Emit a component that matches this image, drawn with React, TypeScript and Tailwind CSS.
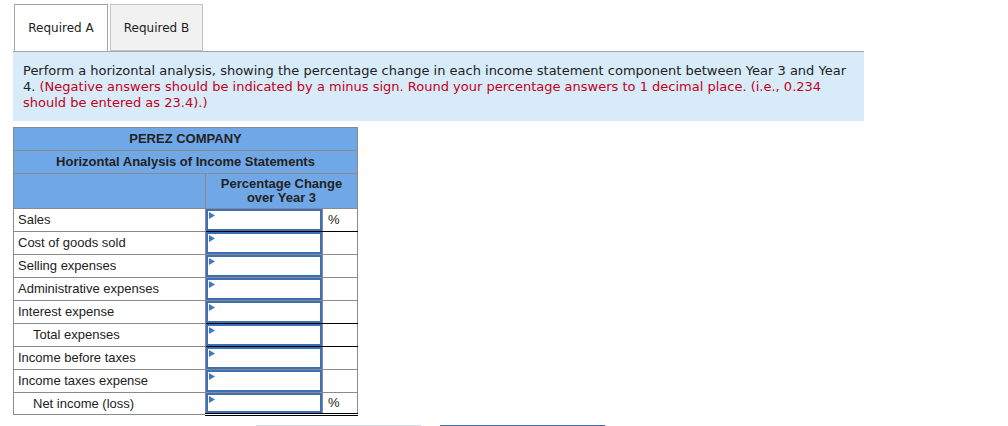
const rows = [
  { label: 'Sales', indent: false, pct: true, line: 'single' },
  { label: 'Cost of goods sold', indent: false, pct: false, line: 'none' },
  { label: 'Selling expenses', indent: false, pct: false, line: 'none' },
  { label: 'Administrative expenses', indent: false, pct: false, line: 'none' },
  { label: 'Interest expense', indent: false, pct: false, line: 'single' },
  { label: 'Total expenses', indent: true, pct: false, line: 'single' },
  { label: 'Income before taxes', indent: false, pct: false, line: 'none' },
  { label: 'Income taxes expense', indent: false, pct: false, line: 'single' },
  { label: 'Net income (loss)', indent: true, pct: true, line: 'double' },
];

function Flag() {
  return (
    <svg className="absolute left-[1px] top-[1px]" width="6" height="7" viewBox="0 0 6 7">
      <path d="M0 0 L6 3.5 L0 7 Z" fill="#3a78d0" />
    </svg>
  );
}

export default function App() {
  return (
    <div className="pl-[13px] pt-[4px] bg-white min-h-[426px] text-[#222]">
      {/* tabs */}
      <div className="flex font-['DejaVu_Sans',sans-serif] text-[12px]">
        <div className="ml-[1px] w-[94px] h-[47px] border border-b-0 border-[#a6a6a6] bg-white flex items-center justify-center">
          Required A
        </div>
        <div className="ml-[2px] w-[93px] h-[47px] border border-[#c4c4c4] bg-[#f1f1f1] flex items-center justify-center">
          Required B
        </div>
      </div>

      {/* instructions */}
      <div className="w-[851px] border-t border-[#a6a6a6] bg-[#d8ebf9] px-[10px] pt-[11px] pb-[10px] font-['DejaVu_Sans',sans-serif] text-[13px] leading-[16px]">
        <p>
          Perform a horizontal analysis, showing the percentage change in each income statement component between Year 3 and Year 4.{' '}
          <span className="text-[#c4001a]">
            (Negative answers should be indicated by a minus sign. Round your percentage answers to 1 decimal place. (i.e., 0.234 should be entered as 23.4).)
          </span>
        </p>
      </div>

      {/* table */}
      <table className="mt-[6px] border-collapse font-['Liberation_Sans',Arial,sans-serif] text-[13px] table-fixed w-[344px]">
        <colgroup>
          <col className="w-[192px]" />
          <col className="w-[117px]" />
          <col className="w-[35px]" />
        </colgroup>
        <thead>
          <tr className="h-[23px] bg-[#70a8e7]">
            <th colSpan={3} className="border border-[#8a8a8a] font-bold text-center p-0">PEREZ COMPANY</th>
          </tr>
          <tr className="h-[23px] bg-[#70a8e7]">
            <th colSpan={3} className="border border-[#8a8a8a] font-bold text-center p-0">Horizontal Analysis of Income Statements</th>
          </tr>
          <tr className="h-[35px] bg-[#70a8e7]">
            <th className="border border-[#8a8a8a] p-0"></th>
            <th colSpan={2} className="border border-[#8a8a8a] font-bold text-center p-0 leading-[14px]">
              Percentage Change
              <br />
              over Year 3
            </th>
          </tr>
        </thead>
        <tbody>
          {rows.map((r) => {
            const bottom =
              r.line === 'double'
                ? 'border-b-[3px] border-b-black border-double'
                : r.line === 'single'
                ? 'border-b border-b-black'
                : 'border-b border-b-[#8a8a8a]';
            const last = r.line === 'double';
            return (
              <tr key={r.label} className={last ? 'h-[21px]' : 'h-[23px]'}>
                <td className={`border border-[#8a8a8a] p-0 ${r.indent ? 'pl-[19px]' : 'pl-[4px]'}`}>{r.label}</td>
                <td className={`border border-[#8a8a8a] p-0 ${bottom}`}>
                  <div className={`relative border-2 border-[#3d6fb6] ${last ? 'h-[20px]' : 'h-[22px]'}`}>
                    <Flag />
                  </div>
                </td>
                <td className={`border border-[#8a8a8a] p-0 pl-[5px] ${bottom}`}>{r.pct ? '%' : ''}</td>
              </tr>
            );
          })}
        </tbody>
      </table>

      {/* bottom nav buttons (cut off) */}
      <div className="flex gap-[19px] ml-[243px] mt-[9px]">
        <div className="w-[165px] h-[4px] border-t border-[#d3dde8] bg-[#f4f6f9]"></div>
        <div className="w-[165px] h-[4px] border-t-2 border-[#3e6ea8] bg-white"></div>
      </div>
    </div>
  );
}
